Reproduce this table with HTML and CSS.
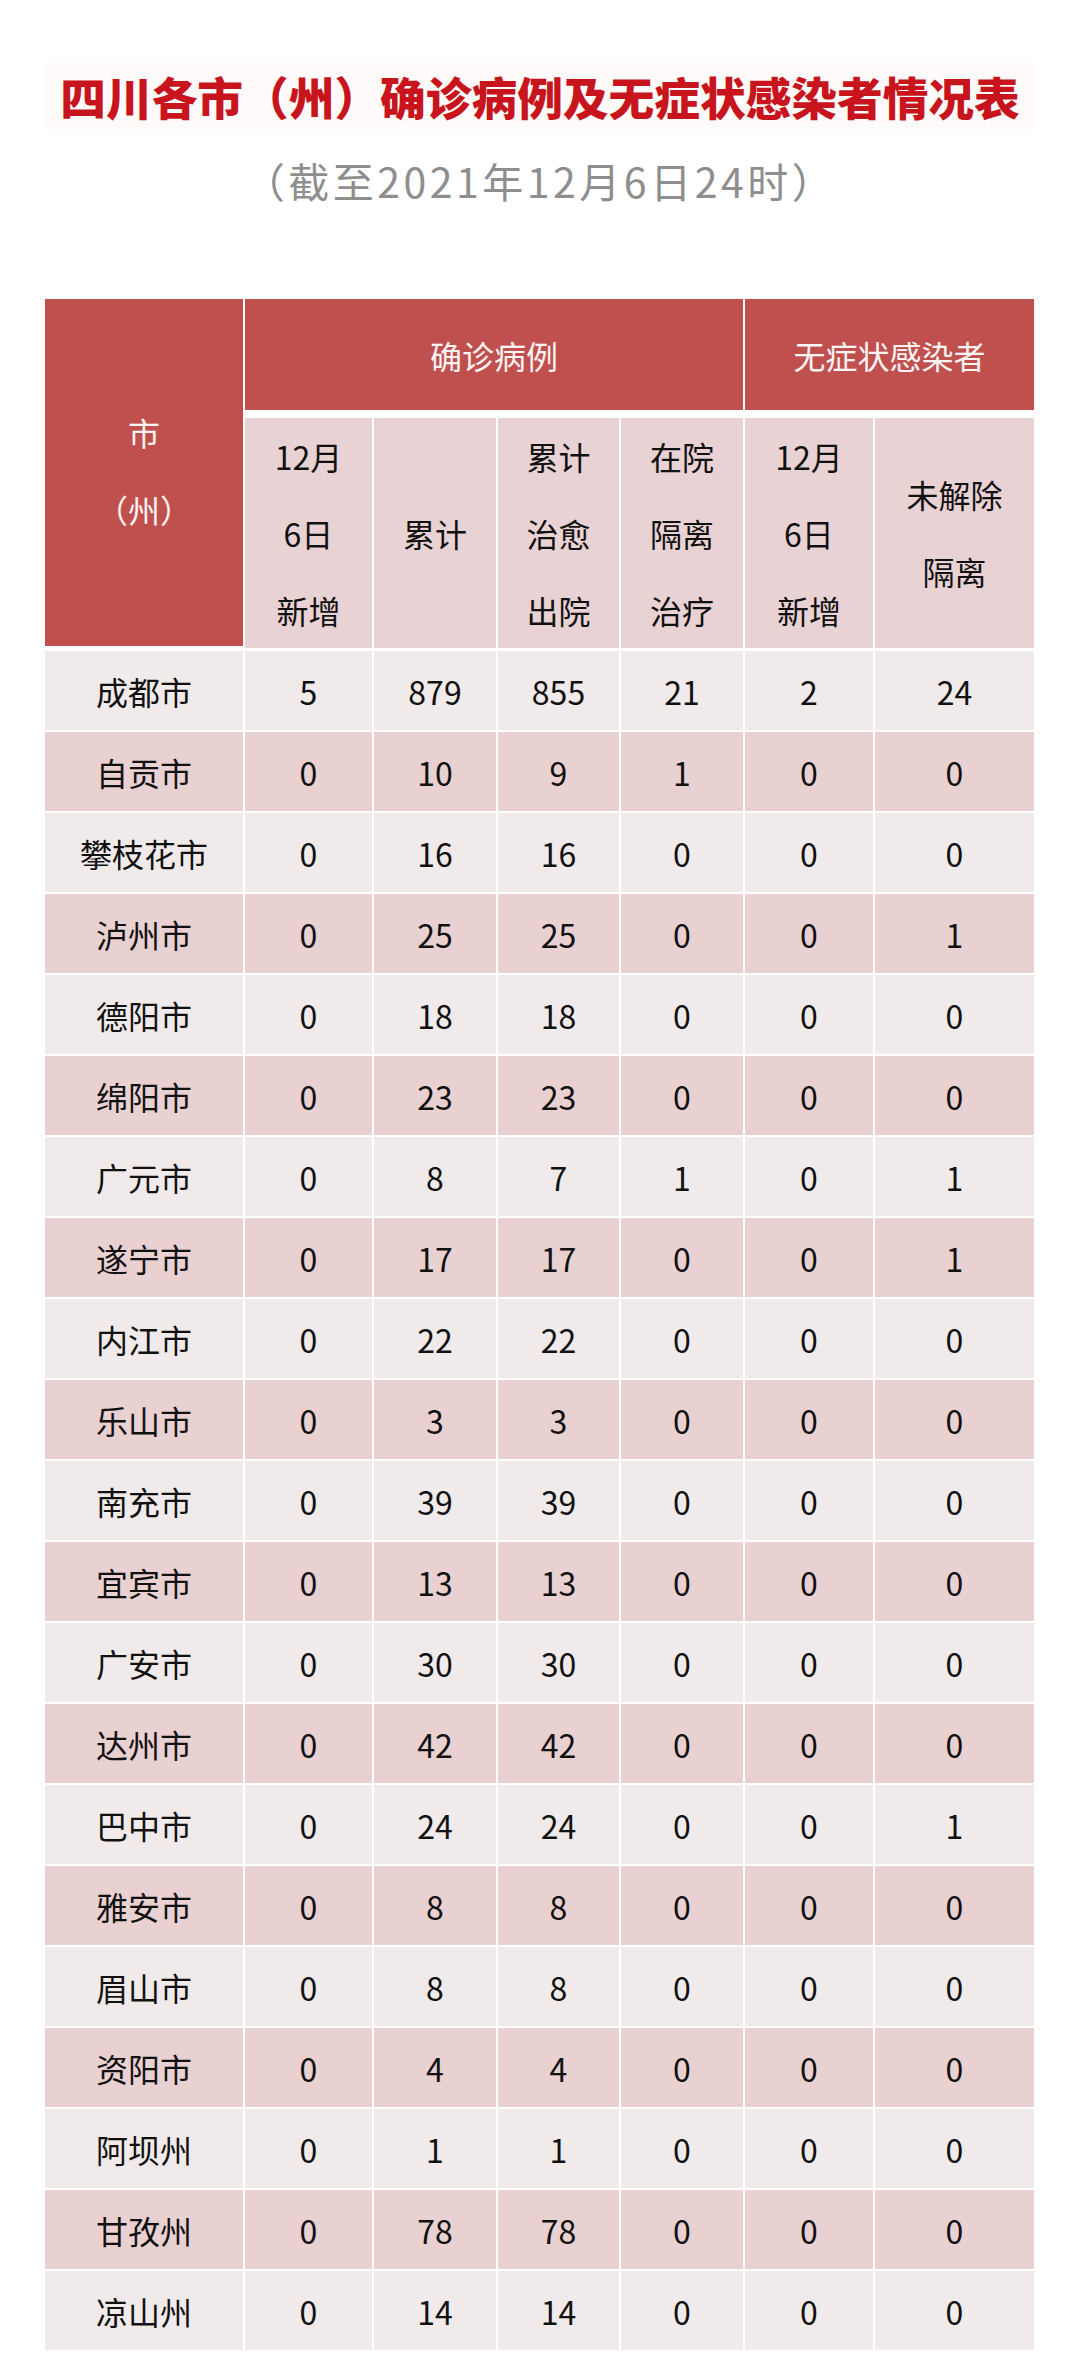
FILE: index.html
```html
<!DOCTYPE html>
<html lang="zh-CN">
<head>
<meta charset="utf-8">
<title>四川各市（州）确诊病例及无症状感染者情况表</title>
<link rel="stylesheet" href="styles.css">
</head>
<body>
<div class="page">
  <div class="title-wrap"><h1 class="title">四川各市（州）确诊病例及无症状感染者情况表</h1></div>
  <p class="subtitle">（截至2021年12月6日24时）</p>

  <div class="table">
    <div class="head">
      <div class="hc city-head"><span>市</span><span class="halt">（州）</span></div>
      <div class="hc group g1">确诊病例</div>
      <div class="hc group g2">无症状感染者</div>
      <div class="sc"><span>12月</span><span>6日</span><span>新增</span></div>
      <div class="sc"><span>累计</span></div>
      <div class="sc"><span>累计</span><span>治愈</span><span>出院</span></div>
      <div class="sc"><span>在院</span><span>隔离</span><span>治疗</span></div>
      <div class="sc"><span>12月</span><span>6日</span><span>新增</span></div>
      <div class="sc"><span>未解除</span><span>隔离</span></div>
    </div>

    <div class="body">
      <div class="row light"><div>成都市</div><div>5</div><div>879</div><div>855</div><div>21</div><div>2</div><div>24</div></div>
      <div class="row pink"><div>自贡市</div><div>0</div><div>10</div><div>9</div><div>1</div><div>0</div><div>0</div></div>
      <div class="row light"><div>攀枝花市</div><div>0</div><div>16</div><div>16</div><div>0</div><div>0</div><div>0</div></div>
      <div class="row pink"><div>泸州市</div><div>0</div><div>25</div><div>25</div><div>0</div><div>0</div><div>1</div></div>
      <div class="row light"><div>德阳市</div><div>0</div><div>18</div><div>18</div><div>0</div><div>0</div><div>0</div></div>
      <div class="row pink"><div>绵阳市</div><div>0</div><div>23</div><div>23</div><div>0</div><div>0</div><div>0</div></div>
      <div class="row light"><div>广元市</div><div>0</div><div>8</div><div>7</div><div>1</div><div>0</div><div>1</div></div>
      <div class="row pink"><div>遂宁市</div><div>0</div><div>17</div><div>17</div><div>0</div><div>0</div><div>1</div></div>
      <div class="row light"><div>内江市</div><div>0</div><div>22</div><div>22</div><div>0</div><div>0</div><div>0</div></div>
      <div class="row pink"><div>乐山市</div><div>0</div><div>3</div><div>3</div><div>0</div><div>0</div><div>0</div></div>
      <div class="row light"><div>南充市</div><div>0</div><div>39</div><div>39</div><div>0</div><div>0</div><div>0</div></div>
      <div class="row pink"><div>宜宾市</div><div>0</div><div>13</div><div>13</div><div>0</div><div>0</div><div>0</div></div>
      <div class="row light"><div>广安市</div><div>0</div><div>30</div><div>30</div><div>0</div><div>0</div><div>0</div></div>
      <div class="row pink"><div>达州市</div><div>0</div><div>42</div><div>42</div><div>0</div><div>0</div><div>0</div></div>
      <div class="row light"><div>巴中市</div><div>0</div><div>24</div><div>24</div><div>0</div><div>0</div><div>1</div></div>
      <div class="row pink"><div>雅安市</div><div>0</div><div>8</div><div>8</div><div>0</div><div>0</div><div>0</div></div>
      <div class="row light"><div>眉山市</div><div>0</div><div>8</div><div>8</div><div>0</div><div>0</div><div>0</div></div>
      <div class="row pink"><div>资阳市</div><div>0</div><div>4</div><div>4</div><div>0</div><div>0</div><div>0</div></div>
      <div class="row light"><div>阿坝州</div><div>0</div><div>1</div><div>1</div><div>0</div><div>0</div><div>0</div></div>
      <div class="row pink"><div>甘孜州</div><div>0</div><div>78</div><div>78</div><div>0</div><div>0</div><div>0</div></div>
      <div class="row light"><div>凉山州</div><div>0</div><div>14</div><div>14</div><div>0</div><div>0</div><div>0</div></div>
    </div>
  </div>
</div>
</body>
</html>
```

FILE: styles.css
```css
html, body {
  margin: 0;
  padding: 0;
  background: #ffffff;
}

body {
  font-family: "Noto Sans CJK SC", "Noto Sans", sans-serif;
  color: #111111;
}

.page {
  width: 1080px;
  padding-top: 63px;
}

.title-wrap {
  display: flex;
  justify-content: center;
}

.title {
  margin: 0;
  padding: 3px 16px;
  font-size: 45.7px;
  line-height: 60px;
  font-weight: 800;
  color: #c8151d;
  background: #fefafa;
  white-space: nowrap;
}

.subtitle {
  margin: 23px 0 0;
  text-align: center;
  font-size: 41px;
  line-height: 56px;
  letter-spacing: 3.5px;
  color: #8e8e8e;
  font-feature-settings: "halt";
  white-space: nowrap;
}

.table {
  margin: 91px 0 0 45px;
  width: 989px;
}

.head {
  display: grid;
  grid-template-columns: 198px 127px 122px 121px 122px 128px 159px;
  grid-template-rows: 111px 230px;
  column-gap: 2px;
  row-gap: 8px;
}

.hc {
  background: #c0504e;
  color: #fdf4f4;
  font-size: 32px;
  display: flex;
  align-items: center;
  justify-content: center;
}

.city-head {
  grid-row: 1 / 3;
  grid-column: 1;
  flex-direction: column;
  line-height: 77px;
  margin-bottom: 2px;
  padding-bottom: 4px;
  box-sizing: border-box;
}

.halt {
  font-feature-settings: "halt";
}

.g1 {
  grid-row: 1;
  grid-column: 2 / 6;
}

.g2 {
  grid-row: 1;
  grid-column: 6 / 8;
}

.sc {
  grid-row: 2;
  background: #e9d2d3;
  font-size: 32px;
  line-height: 77px;
  display: flex;
  flex-direction: column;
  align-items: center;
  justify-content: center;
}

.body {
  margin-top: 3px;
  display: flex;
  flex-direction: column;
  gap: 2px;
}

.row {
  display: grid;
  grid-template-columns: 198px 127px 122px 121px 122px 128px 159px;
  column-gap: 2px;
  height: 79px;
}

.row > div {
  display: flex;
  align-items: center;
  justify-content: center;
  font-size: 32px;
}

.row.light > div {
  background: #f0eaea;
}

.row.pink > div {
  background: #e9d0d1;
}
```
